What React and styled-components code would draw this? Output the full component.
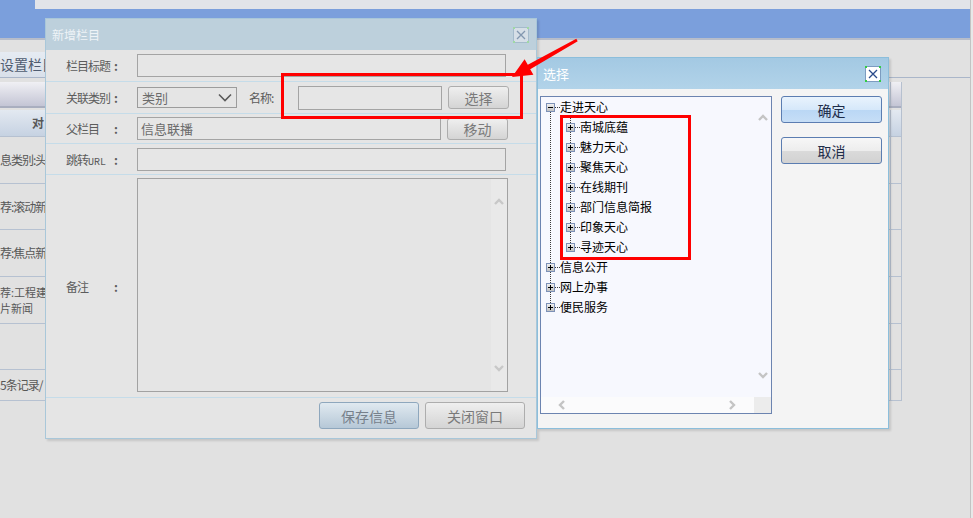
import React from 'react';
import styled, { createGlobalStyle } from 'styled-components';

const GlobalStyle = createGlobalStyle`
  *, *::before, *::after { box-sizing: border-box; }
  html, body { margin: 0; padding: 0; }
  body {
    width: 973px; height: 518px; overflow: hidden;
    background: #e1e1e1;
    font-family: "Noto Sans CJK SC", "Liberation Sans", sans-serif;
  }
`;

const FONT = `"Noto Sans CJK SC", "Liberation Sans", sans-serif`;

/* ---------- background page ---------- */
const Page = styled.div`
  position: relative;
  width: 973px;
  height: 518px;
  display: flex;
  overflow: hidden;
  background: #e1e1e1;
`;
const Screen = styled.div`
  width: 970px;
  display: flex;
  flex-direction: column;
`;
const EdgeBar = styled.div`
  width: 3px;
  border-left: 1px solid #c3c3c3;
  background: #e8e8e8;
`;
const TopStrip = styled.div`
  display: flex;
  height: 9px;
`;
const TopCorner = styled.div`
  width: 35px;
  background: #7b9fdc;
`;
const TopBar = styled.div`
  flex: 1;
  background: #e2e4e9;
`;
const Banner = styled.div`
  height: 31px;
  background: #7b9fdc;
  border-bottom: 2px solid #b7bdca;
`;
const Main = styled.div`
  padding-top: 12px;
`;
const TabStrip = styled.div`
  display: flex;
  border-bottom: 1px solid #aab6c9;
`;
const Tab = styled.div`
  width: 90px;
  height: 25px;
  line-height: 25px;
  background: linear-gradient(#e6ebf2, #d9e0ea);
  font-size: 14px;
  color: #4f5c70;
  white-space: nowrap;
`;
const Table = styled.div`
  width: 902px;
  margin-top: 4px;
  border-right: 1px solid #b6c0cf;
`;
const Strip = styled.div`
  display: flex;
  height: ${p => p.$h}px;
  background: ${p => p.$bg || 'transparent'};
  border-bottom: ${p => p.$bb || '1px solid #b6c1d1'};
  margin-bottom: ${p => p.$mb || 0}px;
`;
const TextCell = styled.div`
  flex-shrink: 0;
  display: flex;
  flex-direction: column;
  justify-content: center;
  padding-left: ${p => p.$pl || 0}px;
  font-size: ${p => (p.$dense ? 11 : 12)}px;
  line-height: 16px;
  letter-spacing: ${p => (p.$dense ? 0 : -1)}px;
  color: #575757;
  font-weight: ${p => (p.$bold ? 700 : 400)};
  white-space: nowrap;
`;
const FillCell = styled.div`
  flex: 1;
`;
const SideCell = styled.div`
  width: 11px;
  border-left: 1px solid #b6c0cf;
`;

/* ---------- windows ---------- */
const Window = styled.section`
  position: absolute;
  left: ${p => p.$x}px;
  top: ${p => p.$y}px;
  width: ${p => p.$w}px;
  height: ${p => p.$h}px;
  display: flex;
  flex-direction: column;
  border: 1px solid ${p => p.$border};
  background: ${p => p.$bg};
  box-shadow: 2px 2px 2px rgba(0, 0, 0, 0.12);
`;
const TitleBar = styled.header`
  height: 31px;
  flex-shrink: 0;
  display: flex;
  align-items: center;
  justify-content: space-between;
  padding: 0 ${p => p.$pr}px 0 ${p => p.$pl}px;
  background: ${p => p.$bg};
  color: ${p => p.$color};
  font-size: ${p => p.$fs}px;
`;

const CloseIcon = ({ bg, border, cross, dot }) => (
  <svg width="16" height="16" viewBox="0 0 16 16">
    <rect x="0.5" y="0.5" width="15" height="15" fill={bg} stroke={border} />
    <path d="M4 4 L12 12 M12 4 L4 12" stroke={cross} strokeWidth="1.3" />
    <rect x="0" y="0" width="2" height="2" fill={dot} />
    <rect x="14" y="0" width="2" height="2" fill={dot} />
    <rect x="0" y="14" width="2" height="2" fill={dot} />
    <rect x="14" y="14" width="2" height="2" fill={dot} />
  </svg>
);

/* ---------- form dialog ---------- */
const FormRow = styled.div`
  display: flex;
  align-items: ${p => (p.$top ? 'flex-start' : 'center')};
  height: ${p => p.$h}px;
  flex-shrink: 0;
  border-bottom: 1px solid #c5dce9;
`;
const FieldLabel = styled.div`
  width: 91px;
  flex-shrink: 0;
  align-self: center;
  padding-left: 20px;
  display: flex;
  align-items: center;
  font-size: 12px;
  letter-spacing: -1px;
  color: #5c5c5c;
`;
const LabelText = styled.span`
  width: 48px;
  white-space: nowrap;
`;
const Colon = styled.span`
  font-weight: 700;
`;
const Small = styled.span`
  font-family: "Liberation Mono", monospace;
  font-size: 10px;
  letter-spacing: 0;
`;
const Field = styled.input`
  width: ${p => p.$w}px;
  height: ${p => p.$h}px;
  margin: 0;
  padding: 0 0 0 3px;
  border: 1px solid #a4a4a4;
  background: #e6e6e6;
  color: #6b6b6b;
  font: 13px ${FONT};
  outline: none;
`;
const SelectBox = styled.div`
  width: 100px;
  height: 21px;
  border: 1px solid #9c9c9c;
  display: flex;
  align-items: center;
  justify-content: space-between;
  padding: 0 4px 0 4px;
  font-size: 13px;
  color: #6b6b6b;
`;
const InlineLabel = styled.span`
  width: 49px;
  margin-left: 12px;
  font-size: 12px;
  letter-spacing: -1px;
  color: #5c5c5c;
  flex-shrink: 0;
`;
const Gap = styled.span`
  width: ${p => p.$w}px;
  flex-shrink: 0;
`;

const btnKinds = {
  dim: { bg: 'linear-gradient(#efefef, #d4d4d4)', border: '#adadad', color: '#7a7a7a' },
  dimBlue: { bg: 'linear-gradient(#e0e9f0, #b6c8d7)', border: '#8ea7bd', color: '#76808b' },
  ok: {
    bg: 'linear-gradient(#e9f3fd 0%, #d6e8fa 50%, #bad7f5 52%, #c6def6 100%)',
    border: '#5b7db1',
    color: '#1e2d4a',
  },
  cancel: {
    bg: 'linear-gradient(#f7f7f7 0%, #ededed 50%, #dadada 52%, #d2d2d2 100%)',
    border: '#5b7db1',
    color: '#1e2d4a',
  },
};
const Btn = styled.button`
  width: ${p => p.$w}px;
  height: ${p => p.$h}px;
  margin: 0;
  padding: 0;
  flex-shrink: 0;
  border: 1px solid ${p => btnKinds[p.$kind].border};
  border-radius: 3px;
  background: ${p => btnKinds[p.$kind].bg};
  color: ${p => btnKinds[p.$kind].color};
  font: ${p => p.$fs}px ${FONT};
  display: flex;
  align-items: center;
  justify-content: center;
`;
const MemoBox = styled.div`
  width: 371px;
  height: 214px;
  margin-top: 3px;
  border: 1px solid #a2a2a2;
  display: flex;
  justify-content: flex-end;
`;
const MemoScroll = styled.div`
  width: 16px;
  background: #e9e9e9;
  display: flex;
  flex-direction: column;
  justify-content: space-between;
  align-items: center;
  padding: 18px 0 18px;
`;
const Footer = styled.div`
  flex: 1;
  display: flex;
  justify-content: flex-end;
  align-items: flex-start;
  gap: 6px;
  padding: 4px 11px 0 0;
`;

const Chevron = ({ dir, color = '#c4c4c4', size = 10 }) => {
  const paths = {
    up: 'M1 7 L5 3 L9 7',
    down: 'M1 3 L5 7 L9 3',
    left: 'M7 1 L3 5 L7 9',
    right: 'M3 1 L7 5 L3 9',
  };
  return (
    <svg width={size} height={size} viewBox="0 0 10 10">
      <path d={paths[dir]} fill="none" stroke={color} strokeWidth="2.4" />
    </svg>
  );
};

/* ---------- picker dialog ---------- */
const PickerBody = styled.div`
  flex: 1;
  display: flex;
  gap: 9px;
  padding: 7px 0 0 2px;
`;
const TreePanel = styled.div`
  width: 232px;
  height: 318px;
  border: 1px solid #6c84b0;
  background: #f7f8fe;
  display: grid;
  grid-template-columns: 1fr 17px;
  grid-template-rows: 1fr 16px;
`;
const TreeArea = styled.div`
  padding-left: 5px;
  overflow: hidden;
`;
const VScroll = styled.div`
  display: flex;
  flex-direction: column;
  justify-content: space-between;
  align-items: center;
  padding: 16px 0 17px;
`;
const HScroll = styled.div`
  background: #fbfbfc;
  display: flex;
  justify-content: space-between;
  align-items: center;
  padding: 0 17px 0 16px;
`;
const ScrollCorner = styled.div`
  background: #ececec;
`;
const ButtonColumn = styled.div`
  display: flex;
  flex-direction: column;
  gap: 14px;
`;
const TreeList = styled.ul`
  list-style: none;
  margin: 0;
  padding: 0 0 0 ${p => (p.$nested ? 20 : 0)}px;
`;
const TreeItem = styled.li`
  position: relative;
  &::before {
    content: '';
    display: ${p => (p.$last ? 'none' : 'block')};
    position: absolute;
    left: 4px;
    top: ${p => (p.$first && p.$nested ? '0' : '10px')};
    bottom: -10px;
    border-left: 1px dotted #3a3a3a;
  }
`;
const TreeRow = styled.div`
  position: relative;
  display: flex;
  align-items: center;
  height: 20px;
`;
const Dots = styled.span`
  width: 5px;
  height: 1px;
  border-top: 1px dotted #3a3a3a;
`;
const NodeText = styled.span`
  font-size: 12px;
  line-height: 20px;
  color: #000;
  white-space: nowrap;
`;
const ToggleBox = ({ open }) => (
  <svg width="9" height="9" viewBox="0 0 9 9" style={{ position: 'relative', flexShrink: 0 }}>
    <defs>
      <linearGradient id="tbg" x1="0" y1="0" x2="0" y2="1">
        <stop offset="0" stopColor="#f4f4f4" />
        <stop offset="1" stopColor="#bdbdbd" />
      </linearGradient>
    </defs>
    <rect x="0.5" y="0.5" width="8" height="8" fill="url(#tbg)" stroke="#7d91b7" />
    <path d="M2 4.5 H7" stroke="#000" />
    {!open && <path d="M4.5 2 V7" stroke="#000" />}
  </svg>
);

/* ---------- annotations ---------- */
const Mark = styled.div`
  position: absolute;
  left: ${p => p.$x}px;
  top: ${p => p.$y}px;
  width: ${p => p.$w}px;
  height: ${p => p.$h}px;
  border: 3px solid #ff0000;
  pointer-events: none;
`;
const ArrowLayer = styled.svg`
  position: absolute;
  left: 505px;
  top: 35px;
  overflow: visible;
`;

const rows = [
  { h: 47, lines: ['息类别:头'] },
  { h: 46, lines: ['荐:滚动新'] },
  { h: 47, lines: ['荐:焦点新'] },
  { h: 47, lines: ['荐:工程建', '片新闻'] },
  { h: 46, lines: [] },
  { h: 31, lines: ['5条记录/'] },
];

const tree = [
  {
    label: '走进天心',
    open: true,
    children: ['南城底蕴', '魅力天心', '聚焦天心', '在线期刊', '部门信息简报', '印象天心', '寻迹天心'],
  },
  { label: '信息公开' },
  { label: '网上办事' },
  { label: '便民服务' },
];

function Node({ label, open, first, last, nested, children }) {
  return (
    <TreeItem $first={first} $last={last} $nested={nested}>
      <TreeRow>
        <ToggleBox open={open} />
        <Dots />
        <NodeText>{label}</NodeText>
      </TreeRow>
      {children && (
        <TreeList $nested>
          {children.map((c, i) => (
            <Node key={c} label={c} nested first={i === 0} last={i === children.length - 1} />
          ))}
        </TreeList>
      )}
    </TreeItem>
  );
}

export default function App() {
  return (
    <Page>
      <GlobalStyle />
      <Screen>
        <TopStrip>
          <TopCorner />
          <TopBar />
        </TopStrip>
        <Banner />
        <Main>
          <TabStrip>
            <Tab>设置栏目</Tab>
          </TabStrip>
          <Table>
            <Strip $h={26} $bg="linear-gradient(#f0f0f4, #c4c5d5)" $bb="2px solid #a9aebf" $mb={2}>
              <FillCell />
              <SideCell />
            </Strip>
            <Strip $h={27} $bg="linear-gradient(#e3e9f1, #c6d2e2)">
              <TextCell $pl={32} $bold>对</TextCell>
              <FillCell />
              <SideCell />
            </Strip>
            {rows.map((r, i) => (
              <Strip key={i} $h={r.h}>
                <TextCell $dense={r.lines.length > 1}>
                  {r.lines.map(l => (
                    <span key={l}>{l}</span>
                  ))}
                </TextCell>
                <FillCell />
                <SideCell />
              </Strip>
            ))}
          </Table>
        </Main>
      </Screen>
      <EdgeBar />

      {/* 新增栏目 dialog (inactive) */}
      <Window $x={45} $y={18} $w={492} $h={421} $border="#a9c7d9" $bg="#e5e5e5">
        <TitleBar $bg="#bdd0dc" $color="#eef3f7" $fs={12} $pl={6} $pr={7}>
          <span>新增栏目</span>
          <CloseIcon bg="#d6dfe7" border="#a5bbcc" cross="#8297b0" dot="#9fd9a4" />
        </TitleBar>
        <FormRow $h={32}>
          <FieldLabel>
            <LabelText>栏目标题</LabelText>
            <Colon>:</Colon>
          </FieldLabel>
          <Field $w={369} $h={23} readOnly defaultValue="" />
        </FormRow>
        <FormRow $h={32}>
          <FieldLabel>
            <LabelText>关联类别</LabelText>
            <Colon>:</Colon>
          </FieldLabel>
          <SelectBox>
            <span>类别</span>
            <svg width="14" height="9" viewBox="0 0 14 9">
              <path d="M1 1.5 L7 7.5 L13 1.5" fill="none" stroke="#5a5a5a" strokeWidth="1.6" />
            </svg>
          </SelectBox>
          <InlineLabel>名称:</InlineLabel>
          <Field $w={144} $h={24} readOnly defaultValue="" />
          <Gap $w={6} />
          <Btn $kind="dim" $w={61} $h={23} $fs={14}>选择</Btn>
        </FormRow>
        <FormRow $h={30}>
          <FieldLabel>
            <LabelText>父栏目</LabelText>
            <Colon>:</Colon>
          </FieldLabel>
          <Field $w={304} $h={23} readOnly defaultValue="信息联播" />
          <Gap $w={6} />
          <Btn $kind="dim" $w={61} $h={22} $fs={14}>移动</Btn>
        </FormRow>
        <FormRow $h={31}>
          <FieldLabel>
            <LabelText>
              跳转<Small>URL</Small>
            </LabelText>
            <Colon>:</Colon>
          </FieldLabel>
          <Field $w={369} $h={23} readOnly defaultValue="" />
        </FormRow>
        <FormRow $h={223} $top>
          <FieldLabel>
            <LabelText>备注</LabelText>
            <Colon>:</Colon>
          </FieldLabel>
          <MemoBox>
            <MemoScroll>
              <Chevron dir="up" color="#c8c8c8" />
              <Chevron dir="down" color="#c8c8c8" />
            </MemoScroll>
          </MemoBox>
        </FormRow>
        <Footer>
          <Btn $kind="dimBlue" $w={100} $h={27} $fs={14}>保存信息</Btn>
          <Btn $kind="dim" $w={100} $h={27} $fs={14}>关闭窗口</Btn>
        </Footer>
      </Window>

      {/* 选择 dialog (active) */}
      <Window $x={537} $y={57} $w={352} $h={372} $border="#8cbedb" $bg="#f4f4f4">
        <TitleBar $bg="linear-gradient(#a3c9e3, #b2d3e9)" $color="#ffffff" $fs={13} $pl={5} $pr={7}>
          <span>选择</span>
          <CloseIcon bg="#ffffff" border="#7c9cc0" cross="#2b4b8b" dot="#33cc44" />
        </TitleBar>
        <PickerBody>
          <TreePanel>
            <TreeArea>
              <TreeList>
                {tree.map((n, i) => (
                  <Node
                    key={n.label}
                    label={n.label}
                    open={n.open}
                    first={i === 0}
                    last={i === tree.length - 1}
                    children={n.children}
                  />
                ))}
              </TreeList>
            </TreeArea>
            <VScroll>
              <Chevron dir="up" />
              <Chevron dir="down" />
            </VScroll>
            <HScroll>
              <Chevron dir="left" />
              <Chevron dir="right" />
            </HScroll>
            <ScrollCorner />
          </TreePanel>
          <ButtonColumn>
            <Btn $kind="ok" $w={101} $h={27} $fs={14}>确定</Btn>
            <Btn $kind="cancel" $w={101} $h={27} $fs={14}>取消</Btn>
          </ButtonColumn>
        </PickerBody>
      </Window>

      <Mark $x={281} $y={73} $w={242} $h={46} />
      <Mark $x={560} $y={115} $w={131} $h={145} />
      <ArrowLayer width="80" height="50" viewBox="0 0 80 50">
        <polygon
          points="7,42 19.6,24.2 22.8,29.8 71.3,3.7 72.7,6.3 25.2,34.2 28.4,39.8"
          fill="#ff0000"
        />
      </ArrowLayer>
    </Page>
  );
}
